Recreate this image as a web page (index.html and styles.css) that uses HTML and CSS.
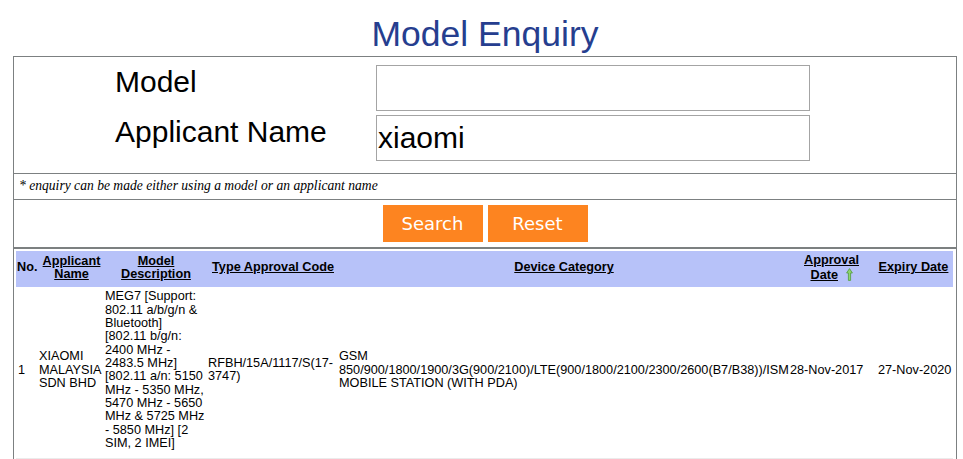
FILE: index.html
```html
<!DOCTYPE html>
<html lang="en">
<head>
<meta charset="utf-8">
<title>Model Enquiry</title>
<link rel="stylesheet" href="styles.css">
</head>
<body>
<h1 class="title">Model Enquiry</h1>
<div class="box">
  <form class="fields">
    <label class="lbl" for="model">Model</label>
    <input class="inp" id="model" type="text" value="">
    <label class="lbl" for="appl">Applicant Name</label>
    <input class="inp" id="appl" type="text" value="xiaomi">
  </form>
  <div class="note">* enquiry can be made either using a model or an applicant name</div>
  <div class="actions">
    <button class="btn" type="button">Search</button>
    <button class="btn" type="button">Reset</button>
  </div>
  <table class="results">
    <colgroup>
      <col class="c1"><col class="c2"><col class="c3"><col class="c4"><col class="c5"><col class="c6"><col class="c7">
    </colgroup>
    <thead>
      <tr class="head">
        <th class="left">No.</th>
        <th><a href="#">Applicant Name</a></th>
        <th><a href="#">Model Description</a></th>
        <th><a href="#">Type Approval Code</a></th>
        <th><a href="#">Device Category</a></th>
        <th><a href="#">Approval Date</a> <svg class="arrow" width="7" height="13" viewBox="0 0 7 13"><path d="M3.5 0.6 L6.4 5 L4.6 5 L4.6 12.4 L2.4 12.4 L2.4 5 L0.6 5 Z" fill="#8fd46f" stroke="#4f9a3c" stroke-width="0.8" stroke-linejoin="round"/></svg></th>
        <th class="exp"><a href="#">Expiry Date</a></th>
      </tr>
    </thead>
    <tbody>
      <tr>
        <td class="num">1</td>
        <td>XIAOMI MALAYSIA SDN BHD</td>
        <td>MEG7 [Support: 802.11 a/b/g/n &amp; Bluetooth] [802.11 b/g/n: 2400 MHz - 2483.5 MHz] [802.11 a/n: 5150 MHz - 5350 MHz, 5470 MHz - 5650 MHz &amp; 5725 MHz - 5850 MHz] [2 SIM, 2 IMEI]</td>
        <td>RFBH/15A/1117/S(17-3747)</td>
        <td class="dev">GSM <span class="nw">850/900/1800/1900/3G(900/2100)/LTE(900/1800/2100/2300/2600(B7/B38))/ISM</span> MOBILE STATION (WITH PDA)</td>
        <td class="appr">28-Nov-2017</td>
        <td class="exp">27-Nov-2020</td>
      </tr>
      <tr class="alt">
        <td class="num">2</td>
        <td>XIAOMI MALAYSIA SDN BHD</td>
        <td>ME 802.11 [Support: 802.11 a/b/g/n &amp; Bluetooth]</td>
        <td>RFBH/15A/1117/S(17-3748)</td>
        <td class="dev">GSM MOBILE STATION (WITH PDA)</td>
        <td class="appr">28-Nov-2017</td>
        <td class="exp">27-Nov-2020</td>
      </tr>
    </tbody>
  </table>
</div>
</body>
</html>
```

FILE: styles.css
```css
html, body {
  margin: 0;
  padding: 0;
  background: #ffffff;
  font-family: "Liberation Sans", Arial, sans-serif;
  overflow: hidden;
}

.title {
  margin: 13px 0 1px 13px;
  width: 944px;
  text-align: center;
  font-size: 35.5px;
  line-height: 42px;
  font-weight: normal;
  color: #263e8f;
}

.box {
  margin-left: 13px;
  width: 942px;
  border: 1px solid #7c8081;
  border-bottom: none;
  height: 420px;
}

.fields {
  display: grid;
  grid-template-columns: 261px 434px;
  grid-auto-rows: 46px;
  row-gap: 4px;
  padding: 8px 0 12px 101px;
  margin: 0;
  border-bottom: 1px solid #7c8081;
}

.lbl {
  font-size: 30px;
  line-height: 34px;
  color: #000;
  align-self: start;
}

.inp {
  box-sizing: border-box;
  width: 434px;
  height: 46px;
  margin: 0;
  border: 1px solid #a4a4a4;
  padding: 0 1px;
  font-family: "Liberation Sans", Arial, sans-serif;
  font-size: 30px;
  color: #000;
  background: #fff;
  outline: none;
}

.note {
  padding: 4px 0 6px 5px;
  height: 15px;
  font-family: "Liberation Serif", "Times New Roman", serif;
  font-style: italic;
  font-size: 13.6px;
  line-height: 15px;
  color: #000;
  border-bottom: 1px solid #7c8081;
}

.actions {
  display: flex;
  justify-content: center;
  gap: 5px;
  padding: 5px 0 5px 0;
  border-bottom: 2px solid #7c8081;
}

.btn {
  width: 100px;
  height: 37px;
  margin: 0;
  padding: 0;
  border: none;
  background: #fd8420;
  color: #fff;
  font-family: "DejaVu Sans", Verdana, sans-serif;
  font-size: 18px;
}

.results {
  margin: 2px 0 0 2px;
  width: 937px;
  table-layout: fixed;
  border-collapse: collapse;
  font-size: 12.7px;
  line-height: 13.35px;
  color: #000;
}

.c1 { width: 22px; }
.c2 { width: 66px; }
.c3 { width: 103px; }
.c4 { width: 131px; }
.c5 { width: 451px; }
.c6 { width: 84px; }
.c7 { width: 80px; }

.head {
  background: #b7c2f9;
}

.results th {
  padding: 3px 0 5px 1px;
  font-weight: bold;
  text-align: center;
  vertical-align: middle;
  line-height: 13.6px;
}

.results th.left {
  text-align: left;
  padding-left: 1px;
}

.results th a {
  color: #000;
  text-decoration: underline;
}

.arrow {
  display: inline-block;
  vertical-align: -2px;
  margin-left: 4px;
}

.results td {
  padding: 3px 0 8px 1px;
  vertical-align: middle;
  text-align: left;
  overflow: visible;
}

.results td.num {
  padding-left: 2px;
}

.results td.appr {
  padding-left: 1px;
}

.results td.exp {
  padding-left: 5px;
}

.results th.exp {
  padding-left: 1px;
}

.nw {
  white-space: nowrap;
}

.alt {
  background: #ebebeb;
}
```
